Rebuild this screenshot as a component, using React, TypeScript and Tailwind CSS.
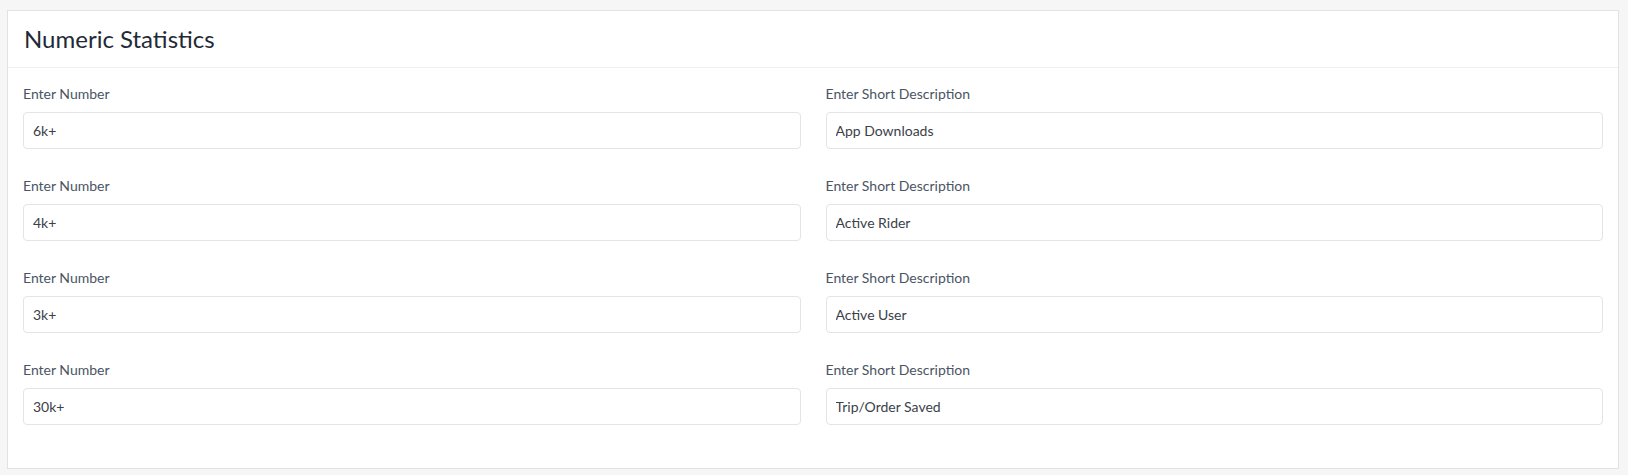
import React from 'react';

const stats = [
  { number: '6k+', description: 'App Downloads' },
  { number: '4k+', description: 'Active Rider' },
  { number: '3k+', description: 'Active User' },
  { number: '30k+', description: 'Trip/Order Saved' },
];

function Field({ label, value }: { label: string; value: string }) {
  return (
    <div className="flex flex-col">
      <label className="text-[14px] leading-[21px] text-[#4a5563] mb-[8px]">{label}</label>
      <input
        type="text"
        defaultValue={value}
        className="h-[37px] w-full rounded-[4px] border border-[#e4e4e7] bg-white px-[9px] text-[14px] text-[#3b4149] outline-none"
      />
    </div>
  );
}

export default function App() {
  return (
    <div
      className="min-h-[475px] bg-[#f6f6f6] pt-[10px] pl-[7px]"
      style={{ fontFamily: '"Lato", "Open Sans", sans-serif' }}
    >
      <div className="w-[1612px] border border-[#e2e2e6] bg-white">
        {/* Header */}
        <div className="h-[57px] flex items-center px-[16px] border-b border-[#f0f0f2]">
          <h2 className="text-[24px] text-[#1f2a37] leading-none">Numeric Statistics</h2>
        </div>

        {/* Body */}
        <div className="px-[15px] pt-[15px] pb-[17px]">
          {stats.map((s) => (
            <div key={s.number} className="grid grid-cols-2 gap-x-[25px] mb-[26px]">
              <Field label="Enter Number" value={s.number} />
              <Field label="Enter Short Description" value={s.description} />
            </div>
          ))}
        </div>
      </div>
    </div>
  );
}
